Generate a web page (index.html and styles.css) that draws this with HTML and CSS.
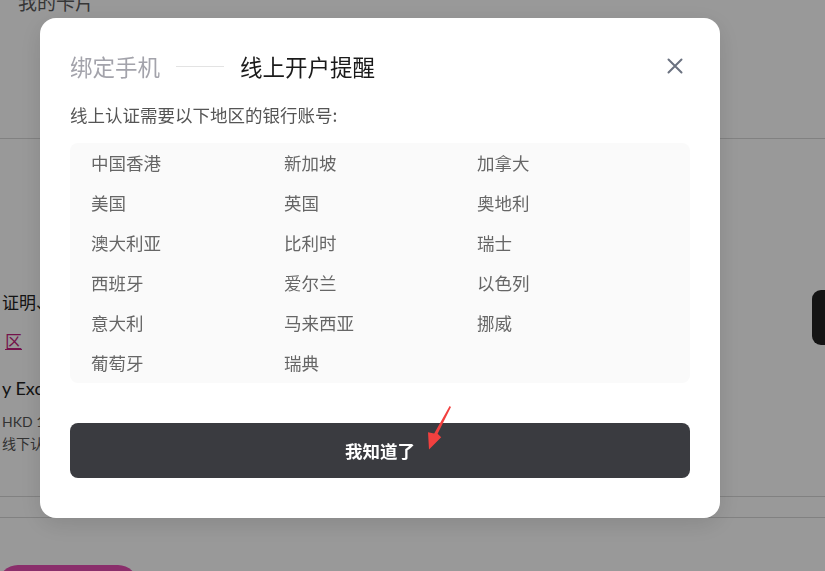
FILE: index.html
```html
<!DOCTYPE html>
<html lang="zh-CN">
<head>
<meta charset="utf-8">
<title>线上开户提醒</title>
<link rel="stylesheet" href="styles.css">
</head>
<body>
<div class="page">
  <div class="bg-header"><div class="bg-title">我的卡片</div></div>
  <div class="bg-body">
    <div class="bg-left">
      <div class="bg-t1">证明、材料</div>
      <div class="bg-link">区</div>
      <div class="bg-t2">y Exchange</div>
      <div class="bg-t3">HKD 1</div>
      <div class="bg-t4">线下认证</div>
    </div>
    <div class="bg-pill"></div>
  </div>
  <div class="bg-foot"></div>
  <div class="bg-btn-row"><div class="bg-btn"></div></div>
</div>

<div class="overlay">
  <div class="modal">
    <div class="modal-head">
      <span class="step step-done">绑定手机</span>
      <span class="step-line"></span>
      <span class="step step-cur">线上开户提醒</span>
      <svg class="close" width="16" height="16" viewBox="0 0 16 16"><path d="M1.5 1.5 L14.5 14.5 M14.5 1.5 L1.5 14.5" stroke="#6b7280" stroke-width="2" stroke-linecap="round" fill="none"/></svg>
    </div>
    <div class="modal-sub">线上认证需要以下地区的银行账号:</div>
    <div class="region-grid">
      <div class="region">中国香港</div>
      <div class="region">新加坡</div>
      <div class="region">加拿大</div>
      <div class="region">美国</div>
      <div class="region">英国</div>
      <div class="region">奥地利</div>
      <div class="region">澳大利亚</div>
      <div class="region">比利时</div>
      <div class="region">瑞士</div>
      <div class="region">西班牙</div>
      <div class="region">爱尔兰</div>
      <div class="region">以色列</div>
      <div class="region">意大利</div>
      <div class="region">马来西亚</div>
      <div class="region">挪威</div>
      <div class="region">葡萄牙</div>
      <div class="region">瑞典</div>
    </div>
    <button class="ok-btn">我知道了</button>
    <svg class="arrow" width="40" height="50" viewBox="0 0 40 50"><polygon points="29.6,3 31,4 17.6,30.8 21.2,34.2 9,46.5 8,29.2 14.2,30.6" fill="#f2403f"/></svg>
  </div>
</div>
</body>
</html>
```

FILE: styles.css
```css
* { box-sizing: border-box; }
html, body { margin: 0; padding: 0; }
body {
  width: 825px;
  height: 571px;
  overflow: hidden;
  background: #ffffff;
  font-family: Lato, "Noto Sans CJK SC", sans-serif;
}
.page { width: 825px; height: 571px; overflow: hidden; }
.bg-header {
  display: flow-root;
  height: 139px;
  border-bottom: 1px solid #d8d8d8;
  padding-left: 18px;
}
.bg-title {
  margin-top: -10px;
  font-size: 19px;
  line-height: 26px;
  color: #5a5a5a;
}
.bg-body {
  height: 358px;
  border-bottom: 1px solid #d8d8d8;
  display: flex;
  justify-content: space-between;
}
.bg-left {
  padding-top: 152px;
  padding-left: 2px;
  white-space: nowrap;
}
.bg-t1 { font-size: 17px; line-height: 24px; color: #222; }
.bg-link {
  margin-top: 15px;
  margin-left: 3px;
  font-size: 17px;
  line-height: 24px;
  color: #c21e7e;
  text-decoration: underline;
}
.bg-t2 { margin-top: 21px; font-size: 18px; line-height: 26px; color: #222; }
.bg-t3 { margin-top: 11px; font-size: 14px; line-height: 20px; color: #555; }
.bg-t4 { margin-top: 2px; font-size: 14px; line-height: 20px; color: #555; }
.bg-pill {
  width: 40px;
  height: 55px;
  margin-top: 151px;
  margin-right: -27px;
  background: #222;
  border-radius: 9px;
}
.bg-foot { height: 21px; border-bottom: 1px solid #d8d8d8; }
.bg-btn-row { padding-top: 47px; }
.bg-btn {
  width: 140px;
  height: 40px;
  background: #e64db2;
  border-radius: 20px;
  margin-left: -2px;
}

.overlay {
  position: fixed;
  inset: 0;
  background: rgba(0, 0, 0, 0.4);
  padding: 18px 0 0 40px;
}
.modal {
  position: relative;
  width: 680px;
  height: 500px;
  background: #ffffff;
  border-radius: 16px;
  box-shadow: 0 6px 24px rgba(0, 0, 0, 0.12);
  padding: 32px 30px 40px 30px;
  font-family: "Noto Sans CJK SC", sans-serif;
}
.modal-head {
  display: flex;
  align-items: center;
  height: 32px;
}
.step { font-size: 22.5px; line-height: 32px; }
.step-done { color: #a3a3ab; }
.step-cur { color: #1a1a1a; }
.step-line {
  width: 48px;
  height: 1px;
  background: #e3e3e3;
  margin: 0 16px 0 16px;
}
.close { margin-left: auto; margin-right: 7px; }
.modal-sub {
  margin-top: 21px;
  font-size: 17.5px;
  line-height: 24px;
  color: #555;
}
.region-grid {
  margin-top: 16px;
  background: #fafafa;
  border-radius: 8px;
  padding: 0 20px 0 21px;
  display: grid;
  grid-template-columns: 193px 193px 1fr;
  grid-auto-rows: 40px;
  height: 240px;
}
.region {
  font-size: 17.5px;
  line-height: 40px;
  color: #666;
}
.ok-btn {
  display: block;
  width: 620px;
  height: 55px;
  margin-top: 40px;
  border: none;
  border-radius: 8px;
  background: #3a3b40;
  color: #ffffff;
  font-family: "Noto Sans CJK SC", sans-serif;
  font-size: 17.5px;
  font-weight: 700;
  padding: 0;
}
.arrow {
  position: absolute;
  left: 380px;
  top: 385px;
}
```
